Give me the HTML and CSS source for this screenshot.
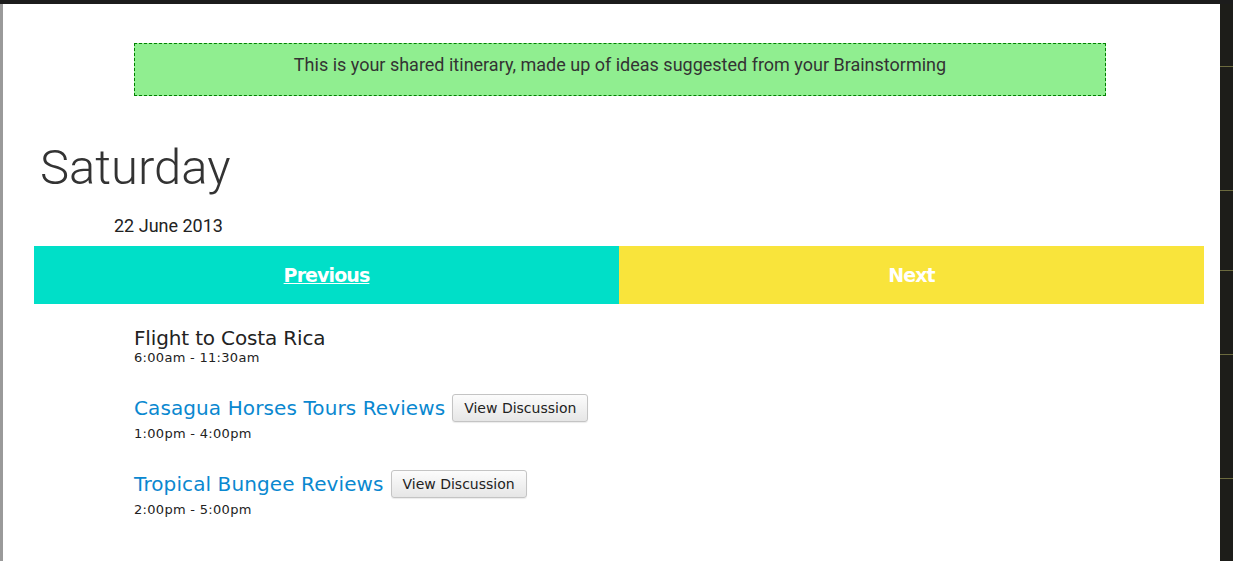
FILE: index.html
```html
<!DOCTYPE html>
<html>
<head>
<meta charset="utf-8">
<link rel="stylesheet" href="styles.css">
</head>
<body>
<div class="topbar"></div>
<div class="frame">
  <div class="leftedge"></div>
  <div class="page">
    <div class="notice">This is your shared itinerary, made up of ideas suggested from your Brainstorming</div>
    <h1 class="day">Saturday</h1>
    <div class="date">22 June 2013</div>
    <div class="nav">
      <a class="nav-prev" href="#">Previous</a>
      <a class="nav-next" href="#">Next</a>
    </div>
    <ul class="items">
      <li class="item">
        <div class="item-head"><span class="item-title">Flight to Costa Rica</span></div>
        <div class="item-time">6:00am - 11:30am</div>
      </li>
      <li class="item">
        <div class="item-head"><a class="item-link" href="#">Casagua Horses Tours Reviews</a><button class="btn">View Discussion</button></div>
        <div class="item-time">1:00pm - 4:00pm</div>
      </li>
      <li class="item">
        <div class="item-head"><a class="item-link" href="#">Tropical Bungee Reviews</a><button class="btn">View Discussion</button></div>
        <div class="item-time">2:00pm - 5:00pm</div>
      </li>
    </ul>
  </div>
  <div class="rightside">
    <div class="rline l1"></div>
    <div class="rline l2"></div>
    <div class="rline l3"></div>
    <div class="rline l4"></div>
    <div class="rline l5"></div>
  </div>
</div>
</body>
</html>
```
FILE: styles.css
```css
html, body {
  margin: 0;
  padding: 0;
  height: 100%;
  overflow: hidden;
}
body {
  background: #1d1d19;
  font-family: "DejaVu Sans", Verdana, sans-serif;
}
.topbar {
  height: 4px;
  background: #1c1c1c;
}
.frame {
  display: flex;
  height: 557px;
}
.leftedge {
  width: 3px;
  background: #9a9a9a;
}
.page {
  width: 1217px;
  background: #fff;
  padding-top: 39px;
  box-sizing: border-box;
}
.rightside {
  flex: 1;
  background: #1d1d19;
  display: flex;
  flex-direction: column;
}
.rline {
  height: 1px;
  background: #6b6a3e;
}
.l1 { margin-top: 62px; }
.l2 { margin-top: 123px; }
.l3 { margin-top: 79px; }
.l4 { margin-top: 83px; }
.l5 { margin-top: 123px; }

.notice {
  margin-left: 131px;
  width: 972px;
  height: 53px;
  box-sizing: border-box;
  background: #90ee90;
  border: 1px dashed #008000;
  color: #333;
  font-family: Roboto, sans-serif;
  font-size: 18px;
  line-height: 22px;
  text-align: center;
  padding-top: 10px;
}
.day {
  margin: 42px 0 0 37px;
  font-family: Roboto, sans-serif;
  font-weight: 300;
  font-size: 49px;
  line-height: 60px;
  color: #333;
}
.date {
  margin: 17px 0 0 111px;
  font-family: Roboto, sans-serif;
  font-size: 18px;
  line-height: 22px;
  color: #222;
}
.nav {
  display: flex;
  margin: 9px 0 0 31px;
  width: 1170px;
  height: 58px;
}
.nav a {
  flex: 1;
  display: flex;
  align-items: center;
  justify-content: center;
  color: #fff;
  font-family: "DejaVu Sans", sans-serif;
  font-weight: bold;
  font-size: 19px;
  letter-spacing: -0.9px;
}
.nav-prev {
  background: #00dfc8;
  text-decoration: underline;
}
.nav-next {
  background: #f9e43b;
  text-decoration: none;
}
.items {
  list-style: none;
  margin: 22px 0 0 131px;
  padding: 0;
}
.item {
  margin-bottom: 24px;
}
.item-head {
  display: flex;
  align-items: center;
  gap: 7px;
  min-height: 24px;
}
.item-title, .item-link {
  font-size: 20px;
  line-height: 24px;
  color: #222;
  text-decoration: none;
}
.item-title {
  letter-spacing: -0.15px;
}
.item-link {
  color: #0a88d0;
  letter-spacing: 0.1px;
}
.item-time {
  font-size: 13px;
  line-height: 16px;
  letter-spacing: 0.3px;
  color: #222;
}
.btn {
  font-family: "DejaVu Sans", sans-serif;
  font-size: 14px;
  color: #222;
  height: 28px;
  margin: 4px 0;
  padding: 0 11px;
  border: 1px solid #c4c4c4;
  border-radius: 3px;
  background: linear-gradient(#fcfcfc, #e6e6e6);
  box-shadow: 0 1px 1px rgba(0,0,0,0.08);
}
```
